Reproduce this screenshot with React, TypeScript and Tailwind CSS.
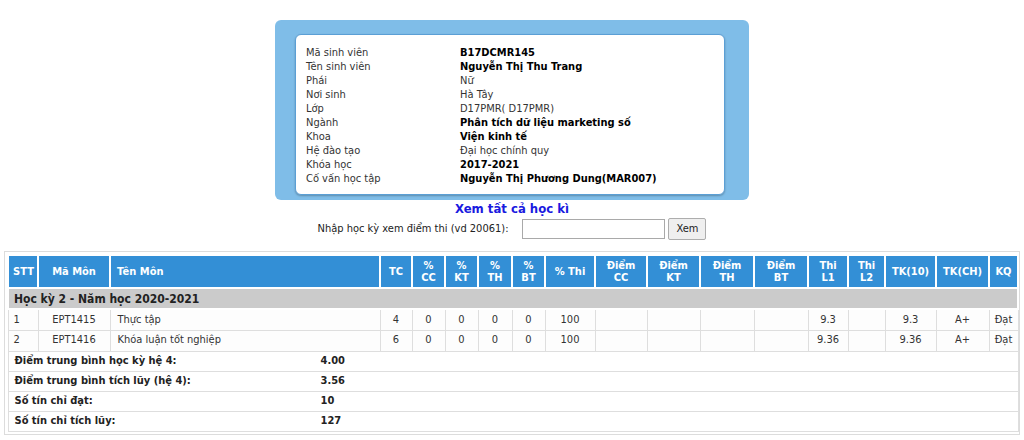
const font = "font-['DejaVu_Sans_Condensed','DejaVu_Sans',sans-serif] font-stretch-condensed";

const info = [
  { label: "Mã sinh viên", value: "B17DCMR145", bold: true },
  { label: "Tên sinh viên", value: "Nguyễn Thị Thu Trang", bold: true },
  { label: "Phái", value: "Nữ", bold: false },
  { label: "Nơi sinh", value: "Hà Tây", bold: false },
  { label: "Lớp", value: "D17PMR( D17PMR)", bold: false },
  { label: "Ngành", value: "Phân tích dữ liệu marketing số", bold: true },
  { label: "Khoa", value: "Viện kinh tế", bold: true },
  { label: "Hệ đào tạo", value: "Đại học chính quy", bold: false },
  { label: "Khóa học", value: "2017-2021", bold: true },
  { label: "Cố vấn học tập", value: "Nguyễn Thị Phương Dung(MAR007)", bold: true },
];

const cols = [30, 72, 270, 32, 33, 33, 34, 33, 50, 52, 53, 54, 54, 40, 37, 51, 53, 29];

const headers: { top: string; bottom?: string; left?: boolean }[] = [
  { top: "STT" },
  { top: "Mã Môn" },
  { top: "Tên Môn", left: true },
  { top: "TC" },
  { top: "%", bottom: "CC" },
  { top: "%", bottom: "KT" },
  { top: "%", bottom: "TH" },
  { top: "%", bottom: "BT" },
  { top: "% Thi" },
  { top: "Điểm", bottom: "CC" },
  { top: "Điểm", bottom: "KT" },
  { top: "Điểm", bottom: "TH" },
  { top: "Điểm", bottom: "BT" },
  { top: "Thi", bottom: "L1" },
  { top: "Thi", bottom: "L2" },
  { top: "TK(10)" },
  { top: "TK(CH)" },
  { top: "KQ" },
];

const rows = [
  ["1", "EPT1415", "Thực tập", "4", "0", "0", "0", "0", "100", "", "", "", "", "9.3", "", "9.3", "A+", "Đạt"],
  ["2", "EPT1416", "Khóa luận tốt nghiệp", "6", "0", "0", "0", "0", "100", "", "", "", "", "9.36", "", "9.36", "A+", "Đạt"],
];

const summary = [
  ["Điểm trung bình học kỳ hệ 4:", "4.00"],
  ["Điểm trung bình tích lũy (hệ 4):", "3.56"],
  ["Số tín chỉ đạt:", "10"],
  ["Số tín chỉ tích lũy:", "127"],
];

export default function App() {
  return (
    <div className={`w-[1024px] h-[440px] overflow-hidden bg-white text-[11px] text-[#333] ${font}`}>
      {/* student info */}
      <div className="mx-auto mt-5 w-[474px] h-[180px] rounded-md bg-[#7fbde8] pt-[14px] pl-[20px] pr-[24px] pb-[5px]">
        <div className="w-[430px] h-[161px] rounded-md border border-[#5b9fd5] bg-white pl-[10px] pt-[11px] shadow-[0_1px_2px_rgba(0,0,0,0.25)]">
          {info.map((r) => (
            <div key={r.label} className="flex h-[14px] leading-[14px]">
              <div className="w-[154px] text-[#333]">{r.label}</div>
              <div className={r.bold ? "font-bold text-black" : "text-[#333]"}>{r.value}</div>
            </div>
          ))}
        </div>
      </div>

      <div className="text-center text-[13px] font-bold leading-[16px] text-[#1a1ae0] mt-[1px]">Xem tất cả học kì</div>

      <div className="flex items-center justify-center mt-[1px] h-[22px]">
        <span className="text-[#222]">Nhập học kỳ xem điểm thi (vd 20061):</span>
        <input className="ml-[14px] w-[143px] h-[20px] border border-[#a9a9a9] bg-white outline-none" />
        <button className="ml-[3px] h-[22px] w-[38px] rounded-[2px] border border-[#adadad] bg-[#efefef] text-[11px] text-[#222]">Xem</button>
      </div>

      {/* grades table */}
      <div className="ml-1 mt-[11px] w-[1016px] border border-[#dcdcdc] p-[2px]">
        <table className="w-[1010px] table-fixed border-collapse">
          <colgroup>
            {cols.map((w, i) => (
              <col key={i} style={{ width: w }} />
            ))}
          </colgroup>
          <thead>
            <tr className="h-[33px]">
              {headers.map((h, i) => (
                <th
                  key={i}
                  className={`border-2 border-white bg-[#338fd6] px-1 text-[11px] font-bold leading-[12px] text-white ${h.left ? "text-left pl-[6px]" : "text-center"}`}
                >
                  {h.top}
                  {h.bottom && <br />}
                  {h.bottom}
                </th>
              ))}
            </tr>
          </thead>
          <tbody>
            <tr className="h-[21px]">
              <td colSpan={18} className="border-2 border-white bg-[#cbcbcb] pl-[5px] text-[12px] font-bold text-[#222]">
                Học kỳ 2 - Năm học 2020-2021
              </td>
            </tr>
            {rows.map((r, ri) => (
              <tr key={ri} className="h-[21px]">
                {r.map((c, ci) => (
                  <td
                    key={ci}
                    className={`border border-[#dedede] bg-[#fdfdfd] ${ci === 0 ? "pl-[5px] text-left" : ci === 2 ? "pl-[7px] text-left" : "text-center"}`}
                  >
                    {c}
                  </td>
                ))}
              </tr>
            ))}
            {summary.map(([l, v]) => (
              <tr key={l} className="h-[20px]">
                <td colSpan={18} className="border border-[#dedede] font-bold text-[#222]">
                  <div className="flex">
                    <div className="w-[312px] pl-[6px]">{l}</div>
                    <div>{v}</div>
                  </div>
                </td>
              </tr>
            ))}
          </tbody>
        </table>
      </div>
    </div>
  );
}
